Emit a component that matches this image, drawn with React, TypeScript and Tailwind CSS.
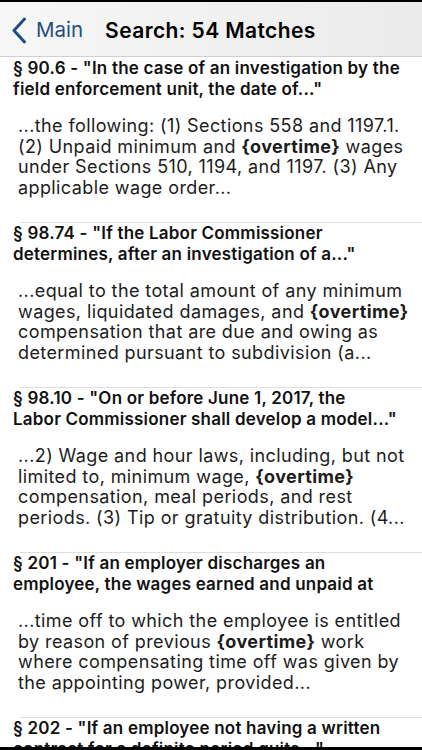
import { ReactNode } from 'react';

type Match = {
  title: string[];
  body: ReactNode[];
};

const Ot = () => <span className="font-bold">{'{overtime}'}</span>;

const matches: Match[] = [
  {
    title: ['§ 90.6 - "In the case of an investigation by the', 'field enforcement unit, the date of..."'],
    body: [
      '...the following: (1) Sections 558 and 1197.1.',
      <>
        (2) Unpaid minimum and <Ot /> wages
      </>,
      'under Sections 510, 1194, and 1197. (3) Any',
      'applicable wage order...',
    ],
  },
  {
    title: ['§ 98.74 - "If the Labor Commissioner', 'determines, after an investigation of a..."'],
    body: [
      '...equal to the total amount of any minimum',
      <>
        wages, liquidated damages, and <Ot />
      </>,
      'compensation that are due and owing as',
      'determined pursuant to subdivision (a...',
    ],
  },
  {
    title: ['§ 98.10 - "On or before June 1, 2017, the', 'Labor Commissioner shall develop a model..."'],
    body: [
      '...2) Wage and hour laws, including, but not',
      <>
        limited to, minimum wage, <Ot />
      </>,
      'compensation, meal periods, and rest',
      'periods. (3) Tip or gratuity distribution. (4...',
    ],
  },
  {
    title: ['§ 201 - "If an employer discharges an', 'employee, the wages earned and unpaid at'],
    body: [
      '...time off to which the employee is entitled',
      <>
        by reason of previous <Ot /> work
      </>,
      'where compensating time off was given by',
      'the appointing power, provided...',
    ],
  },
  {
    title: ['§ 202 - "If an employee not having a written', 'contract for a definite period quits..."'],
    body: [],
  },
];

function Row({ match, first }: { match: Match; first: boolean }) {
  return (
    <div className="relative h-[165px] shrink-0">
      {!first && <div className="absolute top-0 right-0 left-[20px] h-px bg-[#dedede]" />}
      <div className="pt-[1px] pl-[13px] text-[17px] leading-[21px] font-semibold tracking-[0.2px] text-[#111]">
        {match.title.map((line, i) => (
          <div key={i} className="whitespace-nowrap">
            {line}
          </div>
        ))}
      </div>
      <div className="mt-[16px] pl-[18px] text-[18px] leading-[20.5px] tracking-[0.4px] text-[#1c1c1c]">
        {match.body.map((line, i) => (
          <div key={i} className="whitespace-nowrap">
            {line}
          </div>
        ))}
      </div>
    </div>
  );
}

export default function App() {
  return (
    <div
      className="flex h-[750px] w-[422px] flex-col overflow-hidden bg-white"
      style={{ fontFamily: 'Inter, "Liberation Sans", sans-serif' }}
    >
      <div className="h-[2px] shrink-0 bg-black" />
      <div className="flex h-[55px] shrink-0 items-center border-b border-[#cfcfcf] bg-gradient-to-r from-[#f7f7f7] to-[#ebebeb] pt-[3px]">
        <div className="flex items-center pl-[11px] text-[#1f4f7e]">
          <svg width="16" height="27" viewBox="0 0 16 27" fill="none">
            <path d="M13.5 2 L3 13.5 L13.5 25" stroke="currentColor" strokeWidth="3" strokeLinecap="round" strokeLinejoin="round" />
          </svg>
          <span className="ml-[9px] text-[20.5px]">Main</span>
        </div>
        <span className="ml-[22px] text-[21px] font-semibold tracking-[0.4px] text-black">Search: 54 Matches</span>
      </div>
      <div className="flex min-h-0 flex-1 flex-col overflow-hidden">
        {matches.map((m, i) => (
          <Row key={i} match={m} first={i === 0} />
        ))}
      </div>
      <div className="h-[3px] shrink-0 bg-black" />
    </div>
  );
}
